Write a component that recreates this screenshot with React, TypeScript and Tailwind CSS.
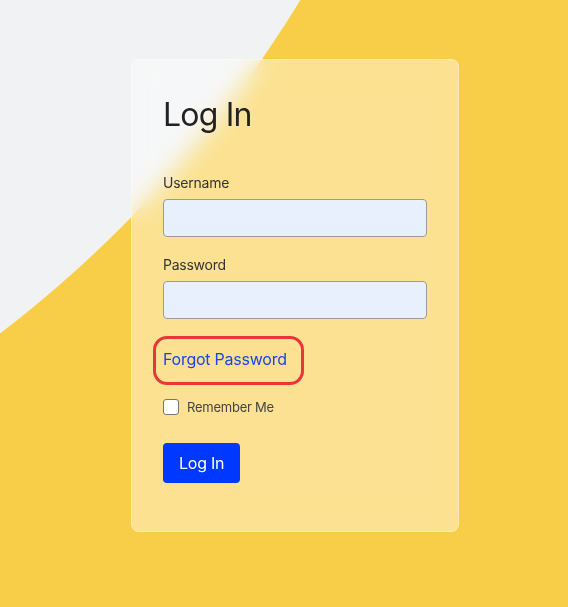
import React from "react";

export default function App() {
  return (
    <div
      className="relative h-[607px] w-full overflow-hidden bg-[#f8ce48] tracking-[-0.015em]"
      style={{ fontFamily: "Inter, 'Noto Sans', sans-serif" }}
    >
      <svg
        className="absolute inset-0 h-full w-full"
        viewBox="0 0 568 607"
        preserveAspectRatio="xMinYMin slice"
        aria-hidden="true"
      >
        <circle cx="-743" cy="-638" r="1223" fill="#f1f2f3" />
      </svg>

      <div className="relative pl-[131px] pt-[59px]">
        <div className="w-[328px] rounded-lg border border-white/30 bg-white/40 pb-[48px] pl-[31px] pr-[31px] pt-[35px] backdrop-blur-md">
          <h1 className="mb-[38px] text-[32px] font-normal leading-[40px] tracking-[-0.025em] text-[#222]">
            Log In
          </h1>

          <label className="mb-[6px] block text-sm leading-5 text-[#333]">
            Username
          </label>
          <input
            type="text"
            className="block h-[38px] w-full rounded-[4px] border border-[#9a9a9a] bg-[#e8f0fe] px-3 outline-none"
          />

          <label className="mb-[6px] mt-[18px] block text-sm leading-5 text-[#333]">
            Password
          </label>
          <input
            type="password"
            className="block h-[38px] w-full rounded-[4px] border border-[#9a9a9a] bg-[#e8f0fe] px-3 outline-none"
          />

          <div className="mt-[28px]">
            <a
              href="#"
              className="relative inline-block text-base leading-6 text-[#1a44ec]"
            >
              Forgot Password
              <span className="pointer-events-none absolute -bottom-[14px] -left-[10px] -right-[17px] -top-[11px] rounded-[14px] border-[3px] border-[#e8363b]" />
            </a>
          </div>

          <div className="mt-[26px] flex items-center gap-2">
            <input
              type="checkbox"
              className="h-4 w-4 appearance-none rounded-[3px] border border-[#767676] bg-white"
            />
            <span className="text-[13px] leading-5 text-[#444]">Remember Me</span>
          </div>

          <button className="mt-[26px] h-10 rounded-[4px] bg-[#0038ff] px-4 text-base font-normal text-white">
            Log In
          </button>
        </div>
      </div>
    </div>
  );
}
